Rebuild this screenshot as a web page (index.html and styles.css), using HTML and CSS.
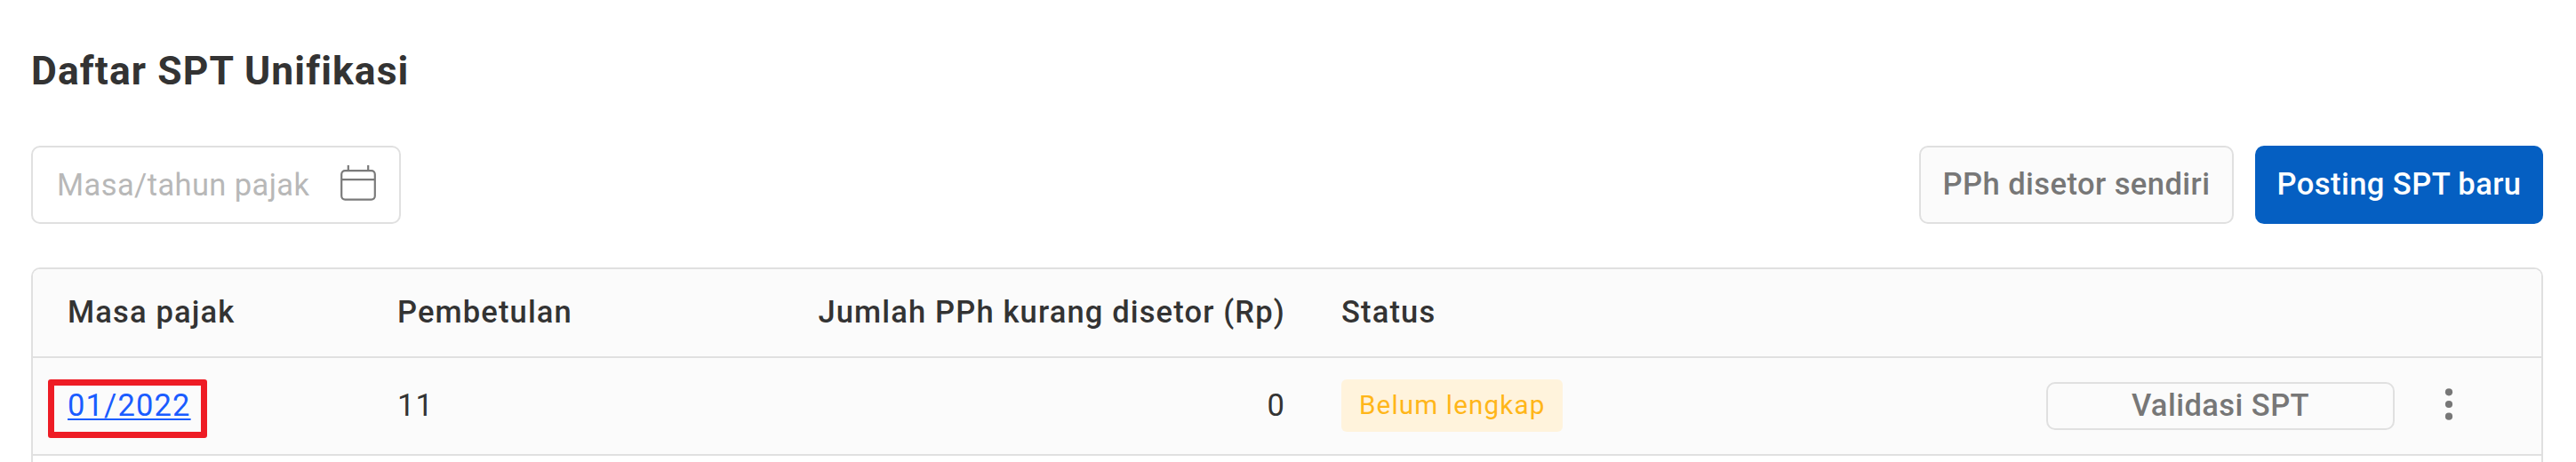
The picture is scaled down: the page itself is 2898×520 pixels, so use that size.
FILE: index.html
```
<!DOCTYPE html>
<html lang="id">
  <head>
    <meta charset="utf-8" />
    <title>Daftar SPT Unifikasi</title>
    <link rel="stylesheet" href="styles.css">
  </head>

  <body>
    <div class="container">
      <h1>Daftar SPT Unifikasi</h1>

      <div class="toolbar">
        <div class="date-field">
          <input type="text" placeholder="Masa/tahun pajak" />
          <svg class="calendar-icon" viewBox="0 0 40 40">
            <rect x="1.2" y="6.2" width="37.6" height="32.4" rx="4" />
            <path d="M1.2 16.2H38.8M8.8 0V6.2M31.2 0V6.2" />
          </svg>
        </div>
        <div class="actions">
          <button class="btn">PPh disetor sendiri</button>
          <button class="btn btn-primary">Posting SPT baru</button>
        </div>
      </div>

      <div class="table">
        <div class="row header">
          <div>Masa pajak</div>
          <div>Pembetulan</div>
          <div class="number">Jumlah PPh kurang disetor (Rp)</div>
          <div>Status</div>
          <div></div>
          <div></div>
        </div>
        <div class="row">
          <div class="period"><a href="#">01/2022</a><span class="highlight"></span></div>
          <div>11</div>
          <div class="number">0</div>
          <div class="status"><span class="badge">Belum lengkap</span></div>
          <button class="btn btn-small">Validasi SPT</button>
          <svg class="more-icon" viewBox="0 0 10 38">
            <circle cx="5" cy="5.3" r="4.1" />
            <circle cx="5" cy="19" r="4.1" />
            <circle cx="5" cy="32.7" r="4.1" />
          </svg>
        </div>
      </div>
    </div>
  </body>
</html>
```
FILE: styles.css
```
* {
  box-sizing: border-box;
}

body {
  margin: 0;
  background-color: white;
  color: #333;
  font-family: Roboto, sans-serif;
  font-size: 34.5px;
  line-height: 40px;
  letter-spacing: 1.15px;
}

.container {
  height: 520px;
  padding: 54px 37px 0 35px;
}

h1 {
  margin: 0 0 58px;
  font-size: 44.4px;
  line-height: 52px;
  font-weight: bold;
  letter-spacing: 1.1px;
}

.toolbar {
  display: flex;
  justify-content: space-between;
  height: 88px;
  margin-bottom: 49px;
}

.date-field {
  display: flex;
  align-items: center;
  width: 416px;
  padding: 0 26px 0 27px;
  border: 2px solid #e0e0e0;
  border-radius: 10px;
}

.date-field input {
  flex: 1;
  min-width: 0;
  padding: 0;
  border: none;
  outline: none;
  background: none;
  font: inherit;
  letter-spacing: 0.4px;
}

.date-field input::placeholder {
  color: #b8b8b8;
}

.calendar-icon {
  width: 40px;
  height: 40px;
  margin-top: -4px;
  fill: none;
  stroke: #7a7a7a;
  stroke-width: 2.2;
}

.actions {
  display: flex;
  gap: 24px;
}

.btn {
  width: 354px;
  padding: 0 0 2px;
  border: 2px solid #e0e0e0;
  border-radius: 10px;
  background-color: #fbfbfb;
  color: #777;
  font: inherit;
  font-weight: 500;
  letter-spacing: 0.45px;
}

.btn-primary {
  width: 324px;
  border: none;
  background-color: #055fc2;
  color: white;
}

.btn-small {
  width: 392px;
  height: 54px;
  margin-top: 1px;
}

.table {
  height: 219px;
  border: 2px solid #e0e0e0;
  border-bottom: none;
  border-radius: 10px 10px 0 0;
  background-color: white;
}

.row {
  display: grid;
  grid-template-columns: 371px 427px 635px 793px 448px 1fr;
  align-items: center;
  height: 110px;
  padding: 0 0 2px 39px;
  border-bottom: 2px solid #e0e0e0;
  background-color: #fbfbfb;
}

.header {
  height: 100px;
  border-radius: 8px 8px 0 0;
  font-weight: 500;
}

.number {
  padding-right: 63px;
  text-align: right;
}

.period {
  position: relative;
}

.period a {
  color: #1a5cff;
  text-decoration-thickness: 2.4px;
  text-decoration-skip-ink: none;
  text-underline-offset: 3px;
}

/* red frame over the link */
.highlight {
  position: absolute;
  top: -9px;
  left: -22px;
  width: 179px;
  height: 66px;
  border: 7px solid #ee1c25;
  border-radius: 3px;
}

.status {
  display: flex;
}

.badge {
  margin-top: 1px;
  padding: 0 20px;
  border-radius: 6px;
  background-color: #fff3dc;
  color: #ffb619;
  font-size: 29.6px;
  line-height: 59px;
}

.more-icon {
  width: 10px;
  height: 38px;
  margin-bottom: 2px;
  fill: #777;
}
```
